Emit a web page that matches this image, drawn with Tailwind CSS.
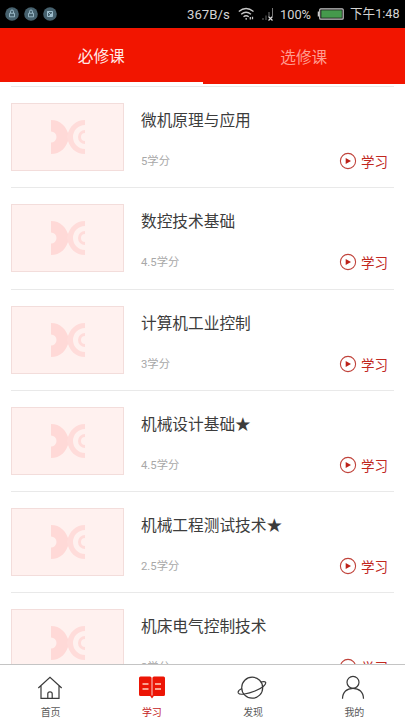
<!DOCTYPE html>
<html lang="zh-CN">
<head>
<meta charset="utf-8">
<title>学习</title>
<script src="https://cdn.jsdelivr.net/npm/@tailwindcss/browser@4"></script>
</head>
<body class="bg-white">
<svg class="hidden">
  <symbol id="logo" viewBox="0 0 34 34">
    <path d="M0 0C9 0 16 6 18 17C16 28 9 34 0 34V22.500A5.500 5.500 0 0 0 0 11.500Z" fill="#ffd9d7"/>
    <path d="M34 0C25 0 18 6 16 17C18 28 25 34 34 34V29A12 12 0 0 1 34 5Z" fill="#ffdcda"/>
    <path d="M34 11.500A5.500 5.500 0 0 0 34 22.500" fill="none" stroke="#ffdcda" stroke-width="3"/>
  </symbol>
  <symbol id="play" viewBox="0 0 18 18">
    <circle cx="9" cy="9" r="7.600" fill="none" stroke="#c0433b" stroke-width="1.100"/>
    <path d="M6.700 5.900L12 9L6.700 12.100Z" fill="#bd2018"/>
  </symbol>
</svg>
<div class="flex h-[720px] w-[405px] flex-col overflow-hidden bg-white font-['Roboto','Noto_Sans_CJK_SC',sans-serif]">
  <header class="flex h-7 shrink-0 items-center bg-black pl-[5px] pr-[5px] text-[12.800px] text-[#d4d4d4]">
    <div class="flex gap-[5px]">
      <svg class="size-[14px]" viewBox="0 0 14 14"><circle cx="7" cy="7" r="6.800" fill="#46616e"/><path d="M4.500 6.300h5v3.500h-5zM5.500 6V4.500a1.500 1.500 0 0 1 3 0V6" fill="none" stroke="#a9c9d8" stroke-width=".8"/></svg>
      <svg class="size-[14px]" viewBox="0 0 14 14"><circle cx="7" cy="7" r="6.800" fill="#46616e"/><path d="M4.500 6.300h5v3.500h-5zM5.500 6V4.500a1.500 1.500 0 0 1 3 0V6" fill="none" stroke="#a9c9d8" stroke-width=".8"/></svg>
      <svg class="size-[14px]" viewBox="0 0 14 14"><circle cx="7" cy="7" r="6.800" fill="#46616e"/><path d="M4.500 4.500h5v5h-5zM4.500 4.500l4 4M6.500 8.500h2v-2" fill="none" stroke="#a9c9d8" stroke-width=".9"/></svg>
    </div>
    <span class="ml-auto w-[44px] whitespace-nowrap pt-px text-[13.200px]">367B/s</span>
    <svg class="ml-[7px] h-[14px] w-[17px]" viewBox="0 0 17 14" fill="none" stroke="#c8c8c8" stroke-width="1.300"><path d="M.8 4.500Q8 -1.500 15.500 4.500M3.200 7.200Q8 3.300 13 7.200M5.500 9.800Q8 7.700 10.800 9.800"/><circle cx="8.200" cy="11.800" r=".9" fill="#c8c8c8" stroke="none"/><path d="M12.300 10v2.500M14.500 9.700v2.500"/></svg>
    <svg class="ml-[7px] h-[13px] w-[12px]" viewBox="0 0 12 13" fill="none"><path d="M1 10v2M4 7.500V12" stroke="#666"/><path d="M7 4v4M10.500 0v8" stroke="#777"/><path d="M6.500 8.500l4 4M10.500 8.500l-4 4" stroke="#ddd" stroke-width="1.200"/></svg>
    <span class="ml-[6px] w-[33px] whitespace-nowrap pt-px">100%</span>
    <svg class="ml-[4px] h-[12px] w-[27px]" viewBox="0 0 27 12"><path d="M1.500 3.500v5" stroke="#ccc" stroke-width="1.500"/><rect x="2.700" y=".8" width="23.500" height="10.400" rx="1" fill="#111" stroke="#c5c5c5" stroke-width="1.200"/><rect x="4.300" y="2.300" width="20.500" height="7.400" fill="#45994c"/></svg>
    <span class="ml-[6px] w-[50px] whitespace-nowrap pt-px text-[12.600px]">下午1:48</span>
  </header>
  <nav class="grid h-14 shrink-0 grid-cols-2 bg-[#f21500] text-center text-[15.700px] leading-[57px]">
    <div class="h-[56px] border-b-2 border-white text-[#ffebe8]">必修课</div>
    <div class="text-[#ff9c90]"><span class="relative top-px">选修课</span></div>
  </nav>
  <main id="courses" class="min-h-0 flex-1 overflow-hidden px-[11px] pt-[2px]"></main>
  <footer class="grid h-14 shrink-0 grid-cols-4 border-t border-[#c4c4c4] bg-white text-[10px] text-[#5a5a5a]">
    <div class="flex flex-col items-center pt-[10px]">
      <svg class="size-[26px] -translate-x-px" viewBox="0 0 26 26" fill="none" stroke="#3a3a3a" stroke-width="1.200"><path d="M1.300 13L13 2.200L24.700 13M4 11V23.300H22V11M10.800 23V18.800Q10.800 16.800 13 16.800T15.200 18.800V23"/></svg>
      <span class="mt-[4px] leading-[15px]">首页</span>
    </div>
    <div class="flex flex-col items-center pt-[10px] text-[#c4221d]">
      <svg class="size-[26px]" viewBox="0 0 26 26"><path d="M1.500 1.500H11Q12.600 1.500 12.600 3V20.500H13.400V3Q13.400 1.500 15 1.500H24.500Q26 1.500 26 3V19.500Q26 21 24.500 21H14.800L13 23.500L11.200 21H1.500Q0 21 0 19.500V3Q0 1.500 1.500 1.500Z" fill="#ec1505"/><path d="M3.500 9h6M3.500 14h6M16 9h6M16 14h6" stroke="#ffd0bd" stroke-width="1.400"/></svg>
      <span class="mt-[4px] leading-[15px]">学习</span>
    </div>
    <div class="flex flex-col items-center pt-[10px]">
      <svg class="h-[26px] w-[30px] -translate-x-px" viewBox="0 0 30 26" fill="none" stroke="#3a3a3a" stroke-width="1.200"><circle cx="15.200" cy="12.700" r="10.500"/><path d="M5 13.500C2.500 14.500.8 16.500 1.300 18C2.500 20.500 11 18.800 18 16C25 13.200 29.500 9.500 28.600 7.300C28 6.200 26 6.500 23.800 7"/></svg>
      <span class="mt-[4px] leading-[15px]">发现</span>
    </div>
    <div class="flex flex-col items-center pt-[10px]">
      <svg class="size-[26px] -translate-x-px" viewBox="0 0 26 26" fill="none" stroke="#3a3a3a" stroke-width="1.200"><circle cx="13" cy="7.300" r="6"/><path d="M2.500 23.800C2.500 17 7 13.300 13 13.300S23.500 17 23.500 23.800"/></svg>
      <span class="mt-[4px] leading-[15px]">我的</span>
    </div>
  </footer>
</div>
<script>
  const courses = [
    ['微机原理与应用', '5学分'],
    ['数控技术基础', '4.5学分'],
    ['计算机工业控制', '3学分'],
    ['机械设计基础★', '4.5学分'],
    ['机械工程测试技术★', '2.5学分'],
    ['机床电气控制技术', '3学分']
  ];
  document.getElementById('courses').innerHTML = courses.map(([name, credit]) => `
    <article class="flex h-[101.300px] border-t border-[#e9e9e9] pt-[16px]">
      <div class="flex h-[68px] w-[113px] shrink-0 items-center justify-center border border-[#f3dddb] bg-[#fff1ef]">
        <svg class="size-[34px]"><use href="#logo"/></svg>
      </div>
      <div class="ml-[17px] flex min-w-0 flex-1 flex-col">
        <h2 class="mt-[6px] text-[15.700px] leading-6 text-[#3c3c3c]">${name}</h2>
        <div class="mt-[18px] flex h-[20px] items-center">
          <span class="translate-y-px text-[11.300px] leading-5 text-[#a8a8a8]">${credit}</span>
          <svg class="ml-auto size-[18px]"><use href="#play"/></svg>
          <span class="ml-[4px] mr-[6px] translate-y-px text-[13.500px] leading-5 text-[#c1281f]">学习</span>
        </div>
      </div>
    </article>`).join('');
</script>
</body>
</html>
